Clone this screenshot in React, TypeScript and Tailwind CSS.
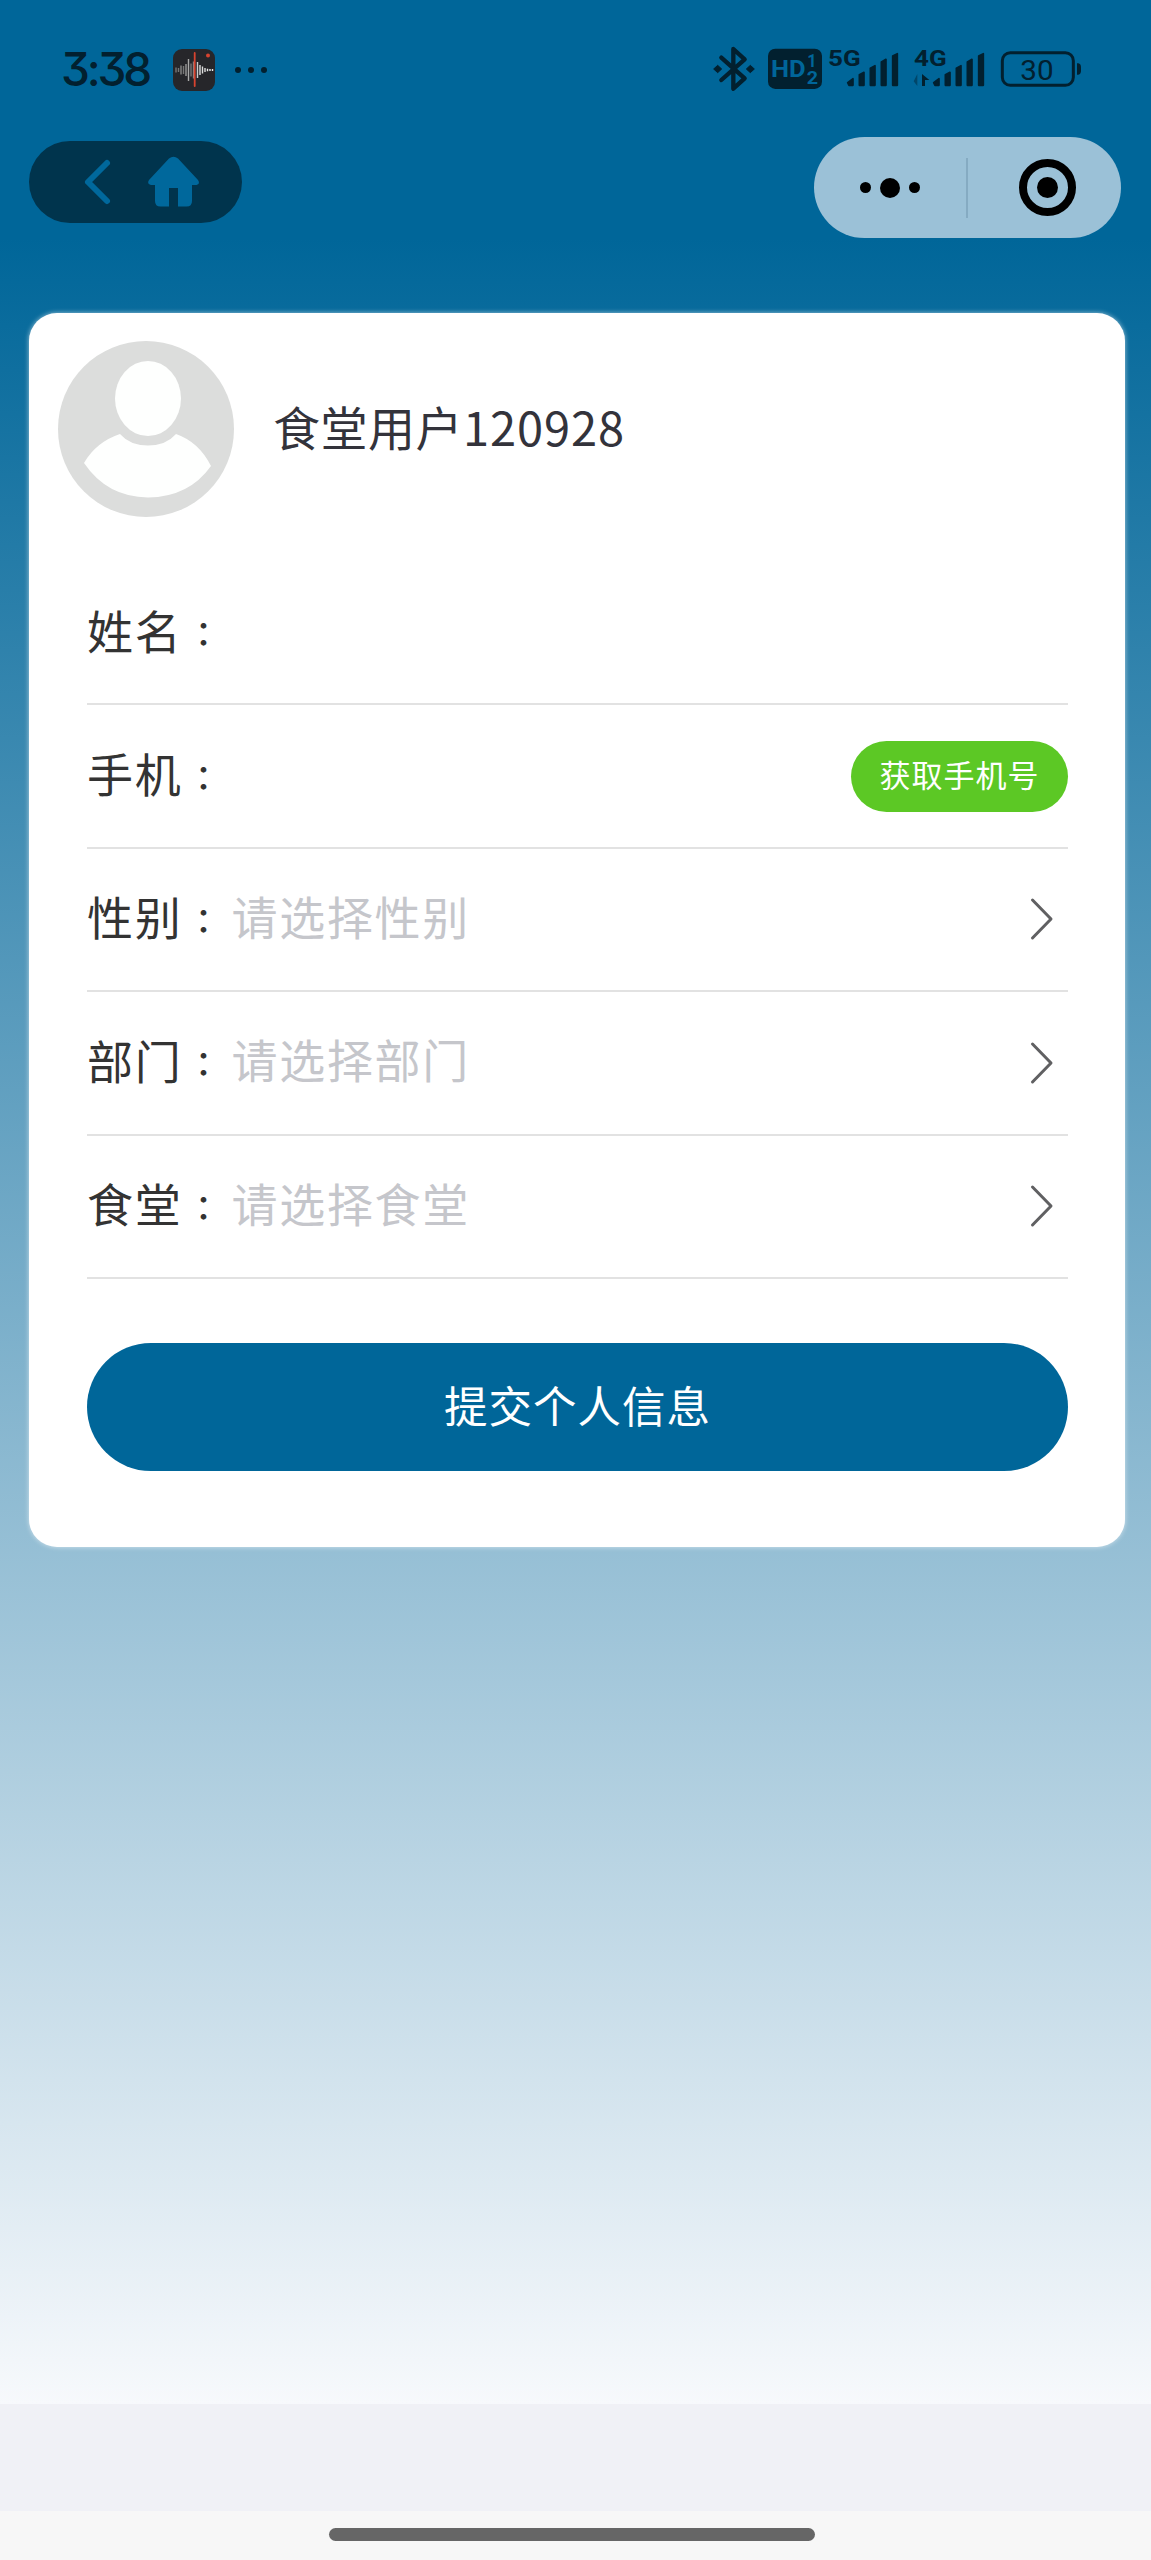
import React from 'react';

const INK = '#02202f';

function RecorderIcon() {
  const bars: [number, number, string][] = [
    [3, 5, '#777'], [5.5, 4, '#777'], [8, 9, '#888'], [10.5, 8, '#777'], [13, 12, '#999'],
    [15.5, 22, '#aaa'], [18, 13, '#777'], [20.5, 17, '#888'], [24.5, 16, '#ccc'], [27, 10, '#ddd'],
    [29.5, 7, '#ddd'], [32, 4, '#ddd'], [34.5, 2.5, '#eee'], [37, 2, '#eee'], [39.5, 2, '#eee'],
  ];
  return (
    <svg className="ml-[22px] h-[42px] w-[42px] shrink-0" viewBox="0 0 42 42">
      <rect width="42" height="42" rx="9" fill="#26262a" />
      {bars.map(([x, h, c]) => (
        <rect key={x} x={x - 0.7} y={21 - h / 2} width="1.4" height={h} fill={c} />
      ))}
      <rect x="20.8" y="3" width="1.8" height="35" rx="0.9" fill="#d8432f" />
      <circle cx="35" cy="6.5" r="2" fill="#d8432f" />
    </svg>
  );
}

function BluetoothIcon() {
  return (
    <svg className="h-[50px] w-[42px]" viewBox="68 75 126 150">
      <path
        d="M93 113 163 175 129 206V87L163 118 93 180"
        fill="none"
        stroke={INK}
        strokeWidth="13"
        strokeLinejoin="round"
        strokeLinecap="round"
      />
      <path d="M82 136 94 147 82 158 70 147ZM180 136 192 147 180 158 168 147Z" fill={INK} stroke={INK} strokeWidth="3" strokeLinejoin="round" />
    </svg>
  );
}

function HdIcon() {
  return (
    <svg className="ml-[12px] h-[50px] w-[56px]" viewBox="231 75 168 150">
      <rect x="234" y="86" width="162" height="121" rx="22" fill={INK} />
      <g fill="#00669a" fontFamily="Roboto, sans-serif" fontWeight="700">
        <text x="243" y="172" fontSize="72" textLength="104" lengthAdjust="spacingAndGlyphs">HD</text>
        <text x="352" y="140" fontSize="54" textLength="28" lengthAdjust="spacingAndGlyphs">1</text>
        <text x="350" y="193" fontSize="54" textLength="34" lengthAdjust="spacingAndGlyphs">2</text>
      </g>
    </svg>
  );
}

function Bars() {
  return (
    <g fill={INK} stroke={INK} strokeWidth="5" strokeLinejoin="round">
      <path d="M472 188 488 176V196H476Z" />
      <path d="M507 164 521 157V196H507Z" />
      <path d="M540 145 554 137V196H540Z" />
      <path d="M573 126 587 118V196H573Z" />
      <path d="M607 108 621 101V196H607Z" />
    </g>
  );
}

function Signal({ label, data }: { label: string; data?: boolean }) {
  return (
    <svg className={data ? 'ml-[14px] h-[50px] w-[72px]' : 'ml-[5px] h-[50px] w-[71px]'} viewBox={data ? '410 75 216 150' : '413 75 213 150'}>
      <text x="413" y="139" fontSize="68" fontFamily="Roboto, sans-serif" fontWeight="700" fill={INK} textLength="98" lengthAdjust="spacingAndGlyphs">
        {label}
      </text>
      <Bars />
      {data && (
        <>
          <path d="M423 162V198L412 184Z" fill={INK} opacity="0.45" />
          <path d="M437 162 459 180 446 180V198H437Z" fill={INK} />
        </>
      )}
    </svg>
  );
}

function BatteryIcon() {
  return (
    <svg className="ml-[15px] h-[50px] w-[82px]" viewBox="930 75 246 150">
      <rect x="937" y="98" width="213" height="98" rx="24" fill="none" stroke={INK} strokeWidth="9" />
      <path d="M1161 130h4q8 2 8 12v10q0 10-8 12h-4Z" fill={INK} />
      <text x="991" y="179" fontSize="84" fontFamily="Roboto, sans-serif" fill={INK} textLength="100" lengthAdjust="spacingAndGlyphs">
        30
      </text>
    </svg>
  );
}

function StatusBar() {
  return (
    <div className="flex h-[137px] items-start justify-between pl-[61px] pr-[69px]">
      <div className="mt-[45px] flex h-[50px] items-center">
        <span className="w-[90px] whitespace-nowrap pb-[2px] font-['Inter'] text-[46px] leading-none font-medium tracking-[-3.2px] text-[#02202f] [font-feature-settings:'cv09']">
          3:38
        </span>
        <RecorderIcon />
        <div className="ml-[20px] flex gap-[7px]">
          <i className="size-[6px] rounded-full bg-[#02202f]" />
          <i className="size-[6px] rounded-full bg-[#02202f]" />
          <i className="size-[6px] rounded-full bg-[#02202f]" />
        </div>
      </div>
      <div className="mt-[45px] flex">
        <BluetoothIcon />
        <HdIcon />
        <Signal label="5G" />
        <Signal label="4G" data />
        <BatteryIcon />
      </div>
    </div>
  );
}

function NavBar() {
  return (
    <div className="flex h-[101px] items-start justify-between pl-[29px] pr-[30px]">
      <div className="mt-1 h-[82px] w-[213px] rounded-full bg-[#00344d]">
        <svg className="h-[82px] w-[213px]" viewBox="0 0 213 82">
          <path d="M78 22 59 41 78 60" fill="none" stroke="#00689c" strokeWidth="6" strokeLinecap="round" strokeLinejoin="round" />
          <path
            d="M140 17.5q4.500-3.500 9 0L169 39q2.500 4-1.500 5H163V60q0 5.500-5.500 5.500H149V47H140V65.500H131.500Q126 65.500 126 60V44H122q-4.500-1-2-5Z"
            fill="#00689c"
          />
        </svg>
      </div>
      <div className="flex h-[101px] w-[307px] items-center rounded-full bg-[#9bc1d7]">
        <div className="flex w-[152px] items-center justify-center gap-[9px]">
          <i className="size-[11px] rounded-full bg-black" />
          <i className="size-[20px] rounded-full bg-black" />
          <i className="size-[11px] rounded-full bg-black" />
        </div>
        <div className="h-[60px] w-[2px] bg-[#85abc2]" />
        <div className="ml-[51px] flex size-[57px] items-center justify-center rounded-full border-8 border-black">
          <i className="size-[21px] rounded-full bg-black" />
        </div>
      </div>
    </div>
  );
}

function Avatar() {
  return (
    <svg className="size-[176px] shrink-0" viewBox="0 0 176 176">
      <circle cx="88" cy="88" r="88" fill="#dcdddc" />
      <path
        d="M62 93Q72 104.500 90 104.500Q108 104.500 118 93Q141 101 153 125Q131 156 90 156.500Q49 156 26 122Q38 101 62 93Z"
        fill="#fefffe"
      />
      <ellipse cx="90" cy="57.500" rx="33" ry="37.500" fill="#fefffe" />
    </svg>
  );
}

function Chevron() {
  return (
    <svg className="mr-[14px] h-[44px] w-[24px]" viewBox="0 0 24 44">
      <path d="M2.500 3 21 22 2.500 41" fill="none" stroke="#606062" strokeWidth="3" strokeLinecap="round" strokeLinejoin="round" />
    </svg>
  );
}

function Row({ label, placeholder, children }: { label: string; placeholder?: string; children?: React.ReactNode }) {
  return (
    <div className="flex h-[143.400px] items-center border-b-2 border-[#e2e2e2] text-[46px] leading-[60px] tracking-[1.700px] text-[#333]">
      <span className="flex w-[144.500px] shrink-0 items-center pb-[8px] whitespace-nowrap">
        {label}
        <span className="ml-[4px] pt-[9px] font-['Noto_Sans_CJK_TC'] text-[34px] font-medium leading-[50px]">：</span>
      </span>
      <span className="grow pb-[9px] text-[#c5c6cb]">{placeholder}</span>
      {children}
    </div>
  );
}

export default function App() {
  return (
    <div className="flex h-[2560px] w-[1151px] flex-col bg-[#f0f1f6] font-['Noto_Sans_CJK_SC','Noto_Sans',sans-serif]">
      <div className="h-[2404px] shrink-0 bg-[linear-gradient(180deg,#006699_0,#006699_238px,#f7f9fc_2404px)]">
        <StatusBar />
        <NavBar />
        <div className="mt-[75px] ml-[29px] h-[1234px] w-[1096px] rounded-[28px] bg-white pt-[28px] shadow-[0_0_5px_rgba(255,255,255,0.600)]">
          <div className="ml-[29px] flex items-center">
            <Avatar />
            <span className="ml-[39px] pb-[7px] text-[47px] leading-[60px] text-[#33333b]">
              <span className="tracking-[0.500px]">食堂用户</span>
              <span className="tracking-[0.900px]">120928</span>
            </span>
          </div>
          <div className="mt-[45px] mr-[57px] ml-[58px]">
            <Row label="姓名" />
            <Row label="手机">
              <button className="h-[71px] w-[217px] rounded-full bg-[#5cc825] pb-[5px] text-[31px] leading-[66px] tracking-[1px] text-white">
                获取手机号
              </button>
            </Row>
            <Row label="性别" placeholder="请选择性别">
              <Chevron />
            </Row>
            <Row label="部门" placeholder="请选择部门">
              <Chevron />
            </Row>
            <Row label="食堂" placeholder="请选择食堂">
              <Chevron />
            </Row>
            <button className="mt-[64px] flex h-[128px] w-full items-center justify-center rounded-full bg-[#006699] pb-[5px] text-[43.500px] tracking-[1px] text-white">
              提交个人信息
            </button>
          </div>
        </div>
      </div>
      <div className="h-[107px] shrink-0 bg-[#f0f1f6]" />
      <div className="flex h-[49px] shrink-0 items-start justify-center bg-[#f7f7f7] pt-[17px] pr-[7px]">
        <div className="h-[13px] w-[486px] rounded-full bg-[#666]" />
      </div>
    </div>
  );
}
